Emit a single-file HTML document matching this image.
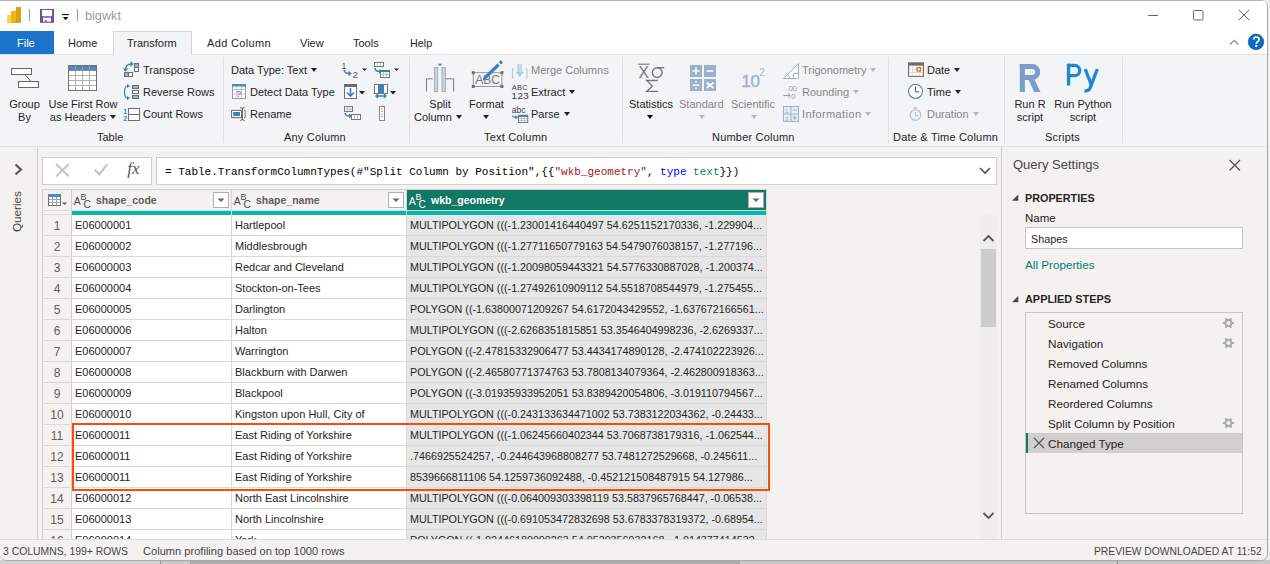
<!DOCTYPE html>
<html><head><meta charset="utf-8">
<style>
*{margin:0;padding:0;box-sizing:border-box}
html,body{width:1270px;height:564px;overflow:hidden;background:#eeeeee;font-family:"Liberation Sans",sans-serif;position:relative}
.a{position:absolute;white-space:nowrap}
#win{position:absolute;left:0;top:0;width:1268px;height:561px;background:#f3f2f1;border-radius:0 7px 7px 7px;overflow:hidden;border-right:1px solid #a8a8a8;border-bottom:1px solid #a8a8a8}
.t{position:absolute;white-space:nowrap;font-size:11px;line-height:13px;color:#252423}
.dis{color:#868686}
.sep{position:absolute;top:57px;width:1px;height:86px;background:#e1e1e1}
.arr{display:inline-block;width:0;height:0;border-left:3.5px solid transparent;border-right:3.5px solid transparent;border-top:4px solid #252423;vertical-align:middle;margin-left:4px;position:relative;top:-1px}
.arr.g{border-top-color:#b5b5b5}
.hd{position:absolute;height:21px;font-size:10.5px;font-weight:bold;color:#605e5c;line-height:21px;white-space:nowrap}
.cell{position:absolute;height:21px;line-height:21px;font-size:11px;color:#252423;overflow:hidden;white-space:nowrap}
.rn{position:absolute;left:42px;width:30px;height:21px;line-height:21px;text-align:center;font-size:12px;color:#605e5c}
.abc{position:absolute;width:20px;height:21px;font-size:10.5px;line-height:21px;white-space:nowrap}
.abc sup{font-size:9px;vertical-align:4px;margin-left:-0.5px}
.abc sub{font-size:10.5px;vertical-align:-3px;margin-left:-1px}
.step{position:absolute;left:1048px;font-size:11.7px;line-height:14px;color:#252423;white-space:nowrap}
.gear{position:absolute;left:1223px;width:11px;height:11px;border-radius:50%;border:2.5px dotted #b8b8b8}
svg{position:absolute;overflow:visible}
</style></head><body>
<div class="a" style="left:0;top:560px;width:1270px;height:4px;background:#c8c8c8"></div>
<div class="a" style="left:0;top:560px;width:160px;height:4px;background:#d2d2d2"></div>
<div class="a" style="left:160px;top:560px;width:1px;height:4px;background:#999"></div>
<div class="a" style="left:190px;top:560px;width:1px;height:4px;background:#aaa"></div>
<div class="a" style="left:191px;top:560px;width:549px;height:4px;background:#adadad"></div>
<div class="a" style="left:1117px;top:561px;width:1px;height:3px;background:#8a8a8a"></div>
<div id="win">
  <!-- title bar -->
  <div class="a" style="left:0;top:0;width:1268px;height:31px;background:#fff;border-top:1px solid #b4b4b4"></div>
  <!-- tab row -->
  <div class="a" style="left:0;top:31px;width:1268px;height:23px;background:#fff"></div>
  <div class="a" style="left:0;top:31px;width:54px;height:23px;background:#1a74c9"></div>
  <div class="t" style="left:17px;top:37px;color:#fff">File</div>
  <!-- ribbon -->
  <div class="a" id="ribbon" style="left:0;top:54px;width:1268px;height:93px;background:#f3f4f6;border-top:1px solid #e1e1e1;border-bottom:1px solid #e1e1e1"></div>

  <!-- title content -->
  <svg style="left:0;top:0" width="130" height="31">
    <rect x="7" y="15" width="5" height="8" fill="#f5d24a"/>
    <rect x="11" y="11" width="5.5" height="12" fill="#eab819"/>
    <rect x="16" y="7" width="5" height="16" fill="#dca311"/>
    <rect x="29" y="9" width="1" height="12" fill="#9a9a9a"/>
    <rect x="40" y="9" width="14" height="13.8" fill="#7b4aa8"/>
    <path d="M42 10 H52 V15.3 Q52 16.3 51 16.3 H43 Q42 16.3 42 15.3 Z" fill="#fff"/>
    <rect x="43" y="17.7" width="8" height="3.9" fill="#fff"/>
    <rect x="45.2" y="20" width="1.8" height="1.6" fill="#7b4aa8"/>
    <rect x="62" y="14" width="7" height="1.1" fill="#111"/>
    <path d="M62.8 17 h5.6 l-2.8 3.2 z" fill="#111"/>
    <rect x="77" y="9" width="1" height="12" fill="#9a9a9a"/>
  </svg>
  <div class="a" style="left:85px;top:9px;font-size:12.7px;line-height:15px;color:#9b9b9b">bigwkt</div>
  <svg style="left:1140px;top:0" width="128" height="54">
    <rect x="8" y="15" width="10" height="1" fill="#666"/>
    <rect x="53.5" y="10.5" width="9.5" height="9.5" rx="1.2" fill="none" stroke="#666" stroke-width="1"/>
    <path d="M99 10 L109 20 M109 10 L99 20" stroke="#666" stroke-width="1"/>
    <path d="M90 44.5 L94.2 40.3 L98.4 44.5" fill="none" stroke="#888" stroke-width="1.1"/>
    <circle cx="116" cy="41.9" r="7.8" fill="#0d68c6" stroke="#0b559f" stroke-width="0.6"/>
  </svg>
  <svg style="left:0;top:0" width="1270" height="60"><path d="M1253.6 39.6 Q1253.8 37 1256.4 37 Q1259 37 1259 39.4 Q1259 41 1257.2 42 Q1256.3 42.6 1256.3 44" fill="none" stroke="#fff" stroke-width="1.7"/><rect x="1255.3" y="45" width="2" height="2" fill="#fff"/></svg>
  <!-- tabs -->
  <div class="a" style="left:113px;top:31px;width:79px;height:24px;background:#f3f4f6;border:1px solid #d6d6d6;border-bottom:none"></div>
  <div class="t" style="left:68px;top:37px">Home</div>
  <div class="t" style="left:127px;top:37px">Transform</div>
  <div class="t" style="left:207px;top:37px;letter-spacing:0.35px">Add Column</div>
  <div class="t" style="left:300px;top:37px">View</div>
  <div class="t" style="left:353px;top:37px">Tools</div>
  <div class="t" style="font-size:10.75px;left:410px;top:37px">Help</div>

  <!-- ===== RIBBON: Table ===== -->
  <svg style="left:0;top:54px" width="224" height="92">
    <rect x="11.5" y="14.5" width="20" height="6" fill="#fff" stroke="#666" stroke-width="1"/>
    <rect x="18.5" y="27.5" width="20" height="6" fill="#fff" stroke="#666" stroke-width="1"/>
    <path d="M25 20.5 L31 27.5" stroke="#666" stroke-width="1"/>
    <!-- use first row -->
    <rect x="68.5" y="11.5" width="28" height="25" fill="#fff" stroke="#707070" stroke-width="1"/>
    <rect x="69" y="12" width="27" height="4.5" fill="#4f86c6"/>
    <path d="M75.5 16.5 V36 M82.5 16.5 V36 M89.5 16.5 V36" stroke="#b0b0b0" stroke-width="1"/>
    <path d="M69 21.5 H96 M69 26.5 H96 M69 31.5 H96" stroke="#b0b0b0" stroke-width="1"/>
    <path d="M69 16.5 H96" stroke="#8a8a8a" stroke-width="1"/><path d="M75.5 12 V16.5 M82.5 12 V16.5 M89.5 12 V16.5" stroke="#9a9a9a" stroke-width="1"/>
    <rect x="68.5" y="11.5" width="28" height="25" fill="none" stroke="#707070" stroke-width="1"/>
    <!-- transpose -->
    <path d="M125.5 16 Q125.5 10 131.5 10" fill="none" stroke="#3c7fc1" stroke-width="1.4"/>
    <path d="M130.5 7.3 L133.8 10 L130.5 12.7 Z" fill="#3c7fc1"/>
    <path d="M123 14.5 L125.5 17.8 L128 14.5 Z" fill="#3c7fc1"/>
    <rect x="124.5" y="18.5" width="8" height="4" fill="#fff" stroke="#6e6e6e"/>
    <rect x="125" y="19" width="3.5" height="3" fill="#8fb2d9"/>
    <path d="M128.5 18.5 V22.5" stroke="#6e6e6e"/>
    <rect x="134.5" y="9.5" width="4" height="8" fill="#fff" stroke="#6e6e6e"/>
    <rect x="135" y="10" width="3" height="3.5" fill="#8fb2d9"/>
    <path d="M134.5 13.5 H138.5" stroke="#6e6e6e"/>
    <!-- reverse rows -->
    <path d="M127.5 32 Q124.5 32 124.5 38 Q124.5 44 127.5 44" fill="none" stroke="#3c7fc1" stroke-width="1.2"/>
    <path d="M127 30 L130 32 L127 34 Z M127 42 L130 44 L127 46 Z" fill="#3c7fc1"/>
    <rect x="132.5" y="31.5" width="6" height="3" fill="#8fb2d9" stroke="#6e6e6e"/>
    <rect x="132.5" y="36.5" width="6" height="3" fill="#fff" stroke="#6e6e6e"/>
    <rect x="132.5" y="41.5" width="6" height="3" fill="#8fb2d9" stroke="#6e6e6e"/>
    <!-- count rows -->
    <rect x="128.5" y="54.5" width="11" height="12" fill="#fff" stroke="#6e6e6e"/>
    <path d="M128.5 60.5 H139.5" stroke="#6e6e6e"/>
    <text x="123.3" y="60" font-size="7" font-weight="bold" fill="#3c7fc1" font-family="Liberation Sans">1</text>
    <text x="123.3" y="67" font-size="7" font-weight="bold" fill="#3c7fc1" font-family="Liberation Sans">2</text>
  </svg>
  <div class="t" style="left:8px;top:98px;width:33px;text-align:center">Group</div>
  <div class="t" style="left:8px;top:111px;width:33px;text-align:center">By</div>
  <div class="t" style="left:48px;top:98px;width:70px;text-align:center">Use First Row</div>
  <div class="t" style="left:48px;top:111px;width:70px;text-align:center">as Headers<span class="arr"></span></div>
  <div class="t" style="left:143px;top:64px">Transpose</div>
  <div class="t" style="left:143px;top:86px">Reverse Rows</div>
  <div class="t" style="left:143px;top:108px">Count Rows</div>
  <div class="t" style="left:97px;top:131px">Table</div>
  <div class="sep" style="left:223px"></div>

  <!-- ===== Any Column ===== -->
  <div class="t" style="left:231px;top:64px">Data Type: Text<span class="arr"></span></div>
  <svg style="left:224px;top:54px" width="186" height="92">
    <!-- detect data type -->
    <rect x="8.5" y="30.5" width="13" height="14" fill="#fff" stroke="#9a9a9a"/>
    <rect x="8" y="30" width="14" height="2.5" fill="#4f86c6"/>
    <path d="M8.5 35.5 H21.5 M8.5 40 H21.5 M13 32 V44.5 M17.5 32 V44.5" stroke="#b5b5b5" stroke-width="0.8"/>
    <text x="12" y="43" font-size="9" fill="#3c7fc1" font-family="Liberation Sans">?</text>
    <!-- rename -->
    <rect x="7.6" y="56.4" width="10" height="7.2" fill="#fff" stroke="#6e6e6e" stroke-width="1.1"/>
    <rect x="9.2" y="58" width="6.8" height="4" fill="#3f7fc0"/>
    <path d="M18.4 54.5 V65.5 M16.2 53.6 Q18.4 53.6 18.4 55 Q18.4 53.6 20.6 53.6 M16.2 66.4 Q18.4 66.4 18.4 65 Q18.4 66.4 20.6 66.4" fill="none" stroke="#555" stroke-width="0.9"/>
    <path d="M20.2 56.4 H21.2 V63.6 H20.2" fill="none" stroke="#6e6e6e" stroke-width="0.9"/>
    <!-- col1 icons -->
    <text x="117.6" y="14.5" font-size="8.6" fill="#555" font-family="Liberation Sans">1</text>
    <path d="M120 16 Q120.5 19.5 126 19.5" fill="none" stroke="#3c7fc1" stroke-width="1.6"/>
    <path d="M124.5 16.8 L127.8 19.5 L124.5 22.2 Z" fill="#3c7fc1"/>
    <text x="128.6" y="24" font-size="9.6" fill="#555" font-family="Liberation Sans">2</text>
    <path d="M138 14.5 h5 l-2.5 2.5 z" fill="#252423"/>
    <!-- col2 top -->
    <rect x="150.5" y="8.5" width="9" height="4" fill="#fff" stroke="#777"/>
    <path d="M153.5 8.5 V12.5 M156.5 8.5 V12.5" stroke="#999" stroke-width="0.6"/>
    <path d="M151 14 Q151 17.5 156 17.5" fill="none" stroke="#3c7fc1" stroke-width="1.4"/>
    <path d="M155 15 L158 17.5 L155 20 Z" fill="#3c7fc1"/>
    <rect x="156.5" y="16.5" width="9" height="7" fill="#fff" stroke="#777"/>
    <rect x="156" y="16" width="10" height="2" fill="#3c7fc1"/>
    <path d="M156.5 20.5 H165.5 M159.5 18 V23.5 M162.5 18 V23.5" stroke="#999" stroke-width="0.6"/>
    <path d="M170 14.5 h5 l-2.5 2.5 z" fill="#252423"/>
    <!-- col1 mid: fill down -->
    <rect x="120.5" y="30.5" width="12" height="14" fill="#fff" stroke="#777"/>
    <rect x="120" y="30" width="13" height="3" fill="#6b6b6b"/>
    <path d="M126.5 34 V42 M123 38.5 L126.5 42 L130 38.5" fill="none" stroke="#3c7fc1" stroke-width="1.6"/>
    <path d="M135 37 h6 l-3 3.5 z" fill="#252423"/>
    <!-- col2 mid -->
    <rect x="150.5" y="30.5" width="4" height="9" fill="#fff" stroke="#777"/>
    <rect x="155" y="30" width="4" height="10" fill="#3c7fc1"/>
    <rect x="159.5" y="30.5" width="4" height="9" fill="#fff" stroke="#777"/>
    <path d="M152 42 H162 M154 40 L152 42 L154 44 M160 40 L162 42 L160 44" fill="none" stroke="#3c7fc1" stroke-width="1.3"/>
    <path d="M166 37 h6 l-3 3.5 z" fill="#252423"/>
    <!-- col1 bottom -->
    <rect x="120.5" y="52.5" width="8" height="5" fill="#fff" stroke="#777"/>
    <path d="M120.5 55 H128.5 M123.2 52.5 V57.5 M125.9 52.5 V57.5" stroke="#999" stroke-width="0.6"/>
    <path d="M121 59 Q121 62 126 62" fill="none" stroke="#3c7fc1" stroke-width="1.3"/>
    <path d="M125 59.5 L128 62 L125 64.5 Z" fill="#3c7fc1"/>
    <rect x="127.5" y="60.5" width="9" height="5" fill="#fff" stroke="#777"/>
    <path d="M130.5 60.5 V65.5 M133.5 60.5 V65.5" stroke="#999" stroke-width="0.6"/>
    <!-- col2 bottom -->
    <rect x="155.5" y="52.5" width="5" height="14" fill="#fff" stroke="#888"/>
    <path d="M157 55 H159 M157 57.5 H159 M157 60 H159 M157 62.5 H159" stroke="#999" stroke-width="0.8"/>
  </svg>
  <div class="t" style="left:250px;top:86px">Detect Data Type</div>
  <div class="t" style="left:250px;top:108px">Rename</div>
  <div class="t" style="left:284px;top:131px;letter-spacing:0.2px">Any Column</div>
  <div class="sep" style="left:409px"></div>

  <!-- ===== Text Column ===== -->
  <svg style="left:410px;top:54px" width="213" height="92">
    <path d="M16.5 37.6 V24.8 H22.5 M35.4 24.8 H43.6 V37.6" fill="none" stroke="#7a7a7a" stroke-width="1"/>
    <rect x="24.4" y="13.5" width="3.3" height="24.1" fill="#c5d6ea" stroke="#a0a0a0" stroke-width="0.8"/>
    <rect x="32" y="13.5" width="3.3" height="24.1" fill="#c5d6ea" stroke="#a0a0a0" stroke-width="0.8"/>
    <path d="M27.6 9.8 h4.8 l-2.4 2.3 z" fill="#3c7fc1"/>
    <!-- format -->
    <rect x="63.3" y="18.7" width="28.6" height="13.7" fill="none" stroke="#8a8a8a" stroke-width="0.9"/>
    <rect x="61.8" y="17.2" width="3" height="3" fill="#6e6e6e"/><rect x="90.4" y="17.2" width="3" height="3" fill="#6e6e6e"/>
    <rect x="61.8" y="30.9" width="3" height="3" fill="#6e6e6e"/><rect x="90.4" y="30.9" width="3" height="3" fill="#6e6e6e"/>
    <text x="65.3" y="29.8" font-size="12" fill="#777" font-family="Liberation Sans">ABC</text>
    <path d="M75.2 23.6 L88.6 10.6" stroke="#3f7fc0" stroke-width="3.4"/>
    <path d="M89.8 9.4 L91.8 7.4" stroke="#3f7fc0" stroke-width="3.4"/>
    <path d="M72.6 26.4 L73.8 22.2 L76.8 25.2 Z" fill="#3f7fc0"/>
    <!-- merge -->
    <path d="M103.8 14.9 H102.4 V23.8 H103.8 M115.6 14.9 H117 V23.8 H115.6" fill="none" stroke="#a9bfdc" stroke-width="1"/>
    <rect x="107.2" y="10.1" width="5" height="9" fill="#c5d6ea"/>
    <path d="M105.8 18 h7.8 l-3.9 5 z" fill="#b5c8e2"/>
    <text x="101.8" y="35.6" font-size="7.4" fill="#3a3a3a" font-family="Liberation Sans" letter-spacing="0.3">ABC</text>
    <text x="101.6" y="44.8" font-size="9.8" fill="#3a3a3a" font-family="Liberation Sans" letter-spacing="0.4">123</text>
    <text x="101.8" y="59.4" font-size="8.6" fill="#3a3a3a" font-family="Liberation Sans">abc</text>
    <path d="M102.2 61.8 Q103.2 63.3 106.3 63.3" fill="none" stroke="#3c7fc1" stroke-width="1.4"/>
    <path d="M105.4 61 L108.2 63.3 L105.4 65.6 Z" fill="#3c7fc1"/>
    <rect x="108" y="60.8" width="10.2" height="2" fill="#3c7fc1"/>
    <rect x="108.5" y="62.5" width="9.2" height="6" fill="#fff" stroke="#777"/>
    <path d="M108.5 64.5 H117.7 M108.5 66.5 H117.7 M111.5 62.5 V68.5 M114.5 62.5 V68.5" stroke="#aaa" stroke-width="0.7"/>
  </svg>
  <div class="t" style="left:419px;top:98px;width:42px;text-align:center">Split</div>
  <div class="t" style="left:414px;top:111px">Column<span class="arr"></span></div>
  <div class="t" style="left:469px;top:98px">Format</div>
  <div class="t" style="left:483px;top:111px"><span class="arr" style="margin-left:0"></span></div>
  <div class="t dis" style="left:531px;top:64px">Merge Columns</div>
  <div class="t" style="left:531px;top:86px">Extract<span class="arr"></span></div>
  <div class="t" style="left:531px;top:108px">Parse<span class="arr"></span></div>
  <div class="t" style="left:484px;top:131px;letter-spacing:0.2px">Text Column</div>
  <div class="sep" style="left:622px"></div>

  <!-- ===== Number Column ===== -->
  <svg style="left:623px;top:54px" width="266" height="92">
    <path d="M15.3 10.2 H26.5" stroke="#777" stroke-width="1.1"/>
    <text x="15.4" y="23.6" font-size="15.6" fill="#777" font-family="Liberation Sans">X</text>
    <circle cx="34.2" cy="18.6" r="4.9" fill="none" stroke="#777" stroke-width="1.4"/>
    <path d="M34 13.7 H41.2" stroke="#777" stroke-width="1.4"/>
    <path d="M34.8 26.5 H23.6 L29.4 32 L23.6 37.4 H35.2" fill="none" stroke="#777" stroke-width="1.3"/>
    <!-- standard -->
    <rect x="67" y="11" width="12" height="12" fill="#9db0cd"/><rect x="81" y="11" width="12" height="12" fill="#9db0cd"/>
    <rect x="67" y="25" width="12" height="12" fill="#9db0cd"/><rect x="81" y="25" width="12" height="12" fill="#9db0cd"/>
    <path d="M69.5 17 h7 M73 13.5 v7 M83.5 17 h7 M69.5 31 h7 M83.5 28.5 l7 5.5 M90.5 28.5 l-7 5.5" stroke="#fff" stroke-width="1.6"/>
    <circle cx="73" cy="27.8" r="0.9" fill="#fff"/><circle cx="73" cy="34.2" r="0.9" fill="#fff"/>
    <text x="118.4" y="32.9" font-size="17" fill="#a3b5cf" stroke="#a3b5cf" stroke-width="0.5" font-family="Liberation Sans" letter-spacing="-0.3">10</text>
    <text x="136.2" y="21.7" font-size="10" fill="#a3b5cf" font-family="Liberation Sans">2</text>
    <!-- trig -->
    <path d="M160.5 24.5 L175.5 9.5 V24.5 Z" fill="#fff" stroke="#9db0cd" stroke-width="1"/>
    <path d="M170.5 24.5 V19.5 H175.5" fill="none" stroke="#9db0cd"/>
    <path d="M166.5 24.5 Q166.5 21 164 19.5" fill="none" stroke="#9db0cd" stroke-width="0.8"/>
    <text x="163.5" y="37" font-size="8" fill="#8d9cb3" font-family="Liberation Sans" letter-spacing="-0.3">.00</text>
    <text x="166" y="45" font-size="8" fill="#8d9cb3" font-family="Liberation Sans" letter-spacing="-0.3">.0</text>
    <path d="M160.5 41.5 H167 M165 39.3 L167.2 41.5 L165 43.7" fill="none" stroke="#8d9cb3" stroke-width="1"/>
    <rect x="160.5" y="52.5" width="15" height="15" fill="#e6ecf5" stroke="#9db0cd"/>
    <path d="M168 52.5 V67.5 M160.5 60 H175.5" stroke="#9db0cd"/>
    <text x="162" y="59" font-size="6" fill="#9aa9bd" font-family="Liberation Sans">1</text>
    <text x="162" y="66.5" font-size="6" fill="#9aa9bd" font-family="Liberation Sans">3</text>
    <path d="M169.5 56 h4.5 M169.5 63.8 h4.5 M171.8 61.5 v4.6" stroke="#9aa9bd" stroke-width="0.9"/>
  </svg>
  <div class="t" style="left:629px;top:98px">Statistics</div>
  <div class="t" style="left:647px;top:111px"><span class="arr" style="margin-left:0;border-top-color:#000"></span></div>
  <div class="t dis" style="left:679px;top:98px">Standard</div>
  <div class="t" style="left:699px;top:111px"><span class="arr g" style="margin-left:0"></span></div>
  <div class="t dis" style="left:731px;top:98px">Scientific</div>
  <div class="t" style="left:751px;top:111px"><span class="arr g" style="margin-left:0"></span></div>
  <div class="t dis" style="left:802px;top:64px">Trigonometry<span class="arr g"></span></div>
  <div class="t dis" style="left:802px;top:86px">Rounding<span class="arr g"></span></div>
  <div class="t dis" style="left:802px;top:108px;letter-spacing:0.4px">Information<span class="arr g"></span></div>
  <div class="t" style="left:712px;top:131px;letter-spacing:0.2px">Number Column</div>
  <div class="sep" style="left:888px"></div>

  <!-- ===== Date & Time ===== -->
  <svg style="left:889px;top:54px" width="116" height="92">
    <rect x="19" y="8.3" width="16" height="14.6" fill="#6e6e6e"/>
    <rect x="20" y="11.5" width="14" height="10.4" fill="#c2c2c2"/>
    <g fill="#fff">
      <rect x="20.4" y="12.0" width="3" height="2.8"/><rect x="23.8" y="12.0" width="3" height="2.8"/><rect x="27.2" y="12.0" width="3" height="2.8"/><rect x="30.6" y="12.0" width="3" height="2.8"/>
      <rect x="20.4" y="15.4" width="3" height="2.8"/><rect x="23.8" y="15.4" width="3" height="2.8"/><rect x="27.2" y="15.4" width="3" height="2.8"/><rect x="30.6" y="15.4" width="3" height="2.8"/>
      <rect x="20.4" y="18.8" width="3" height="2.8"/><rect x="23.8" y="18.8" width="3" height="2.8"/><rect x="27.2" y="18.8" width="3" height="2.8"/><rect x="30.6" y="18.8" width="3" height="2.8"/>
    </g>
    <rect x="28.2" y="13.7" width="3.3" height="3.3" fill="#fff" stroke="#e8701a" stroke-width="1.3"/>
    <circle cx="26.5" cy="37.3" r="7" fill="#fff" stroke="#4a7fc0" stroke-width="1.1"/>
    <path d="M26.5 32.5 V37.8 H30" fill="none" stroke="#555" stroke-width="1"/>
    <circle cx="26.5" cy="61" r="5.3" fill="none" stroke="#a9bfdc" stroke-width="1.1"/>
    <path d="M24.5 53.8 H28.5 M26.5 54 V55.5" stroke="#a9bfdc" stroke-width="1"/>
    <path d="M26.5 58 V61.5 H29" fill="none" stroke="#a9bfdc" stroke-width="0.9"/>
  </svg>
  <div class="t" style="left:927px;top:64px">Date<span class="arr"></span></div>
  <div class="t" style="left:927px;top:86px">Time<span class="arr"></span></div>
  <div class="t dis" style="left:927px;top:108px">Duration<span class="arr g"></span></div>
  <div class="t" style="left:893px;top:131px;letter-spacing:0.2px">Date &amp; Time Column</div>
  <div class="sep" style="left:1004px"></div>

  <!-- ===== Scripts ===== -->
  <svg style="left:0;top:0" width="1270" height="100">
    <g fill="none" stroke="#7a9dca" stroke-width="5.1">
      <path d="M1022.35 63.9 V92"/>
      <path d="M1019.8 66.45 H1032.2 A5.52 5.52 0 0 1 1032.2 77.5 H1022"/>
    </g>
    <path d="M1027.5 77.5 L1033.5 77.5 L1040.5 92 L1034.2 92 Z" fill="#7a9dca"/>
    <g fill="none" stroke="#1e88d6" stroke-width="3.3">
      <path d="M1068.55 63.7 V85.4"/>
      <path d="M1066.9 65.35 H1074.6 A5.15 5.15 0 0 1 1074.6 75.65 H1068.5"/>
      <path d="M1085.2 69 L1091.6 85.6"/>
      <path d="M1097.3 69 L1090.2 87.8 Q1088.6 91.4 1084.5 90.8"/>
    </g>
  </svg>
  
  <div class="t" style="left:1014px;top:98px;width:32px;text-align:center">Run R</div>
  <div class="t" style="left:1014px;top:111px;width:32px;text-align:center">script</div>
  <div class="t" style="left:1052px;top:98px;width:62px;text-align:center">Run Python</div>
  <div class="t" style="left:1052px;top:111px;width:62px;text-align:center">script</div>
  <div class="t" style="left:1045px;top:131px;letter-spacing:0.2px">Scripts</div>
  <div class="sep" style="left:1122px"></div>
  <!-- main -->
  <div class="a" id="main" style="left:0;top:147px;width:1268px;height:392px;background:#f3f2f1"></div>

  <!-- ===== MAIN ===== -->
  <div class="a" style="left:37px;top:147px;width:1px;height:392px;background:#d2d0ce"></div>
  <svg style="left:0;top:147px" width="37" height="100">
    <path d="M15.5 17.5 L21 22.5 L15.5 27.5" fill="none" stroke="#555" stroke-width="2.1"/>
  </svg>
  <div class="a" style="left:-3px;top:204.5px;width:40px;height:14px;font-size:11.7px;line-height:14px;color:#484644;transform:rotate(-90deg);text-align:center">Queries</div>
  <!-- formula bar -->
  <div class="a" style="left:42px;top:157px;width:110px;height:28px;background:#fff;border:1px solid #d2d0ce"></div>
  <svg style="left:42px;top:157px" width="110" height="28">
    <path d="M14 7 L27 19.5 M27 7 L14 19.5" stroke="#c6c6c6" stroke-width="2.2"/>
    <path d="M52.8 12.8 L57.2 17.4 L65.2 7.4" fill="none" stroke="#c6c6c6" stroke-width="2.3"/>
  </svg>
  <div class="a" style="left:127.3px;top:159px;font-family:'Liberation Serif';font-style:italic;font-size:17px;line-height:20px;color:#555">fx</div>
  <div class="a" style="left:156px;top:157px;width:841px;height:28px;background:#fff;border:1px solid #d2d0ce"></div>
  <div class="a" style="left:165px;top:165px;font-family:'Liberation Mono';font-size:11px;line-height:14px;color:#000">= Table.TransformColumnTypes(#"Split Column by Position",{{<span style="color:#a31515">"wkb_geometry"</span>, <span style="color:#0000ff">type</span> <span style="color:#098658">text</span>}})</div>
  <svg style="left:975px;top:160px" width="20" height="20">
    <path d="M5 8 L10 13 L15 8" fill="none" stroke="#555" stroke-width="1.6"/>
  </svg>
  <!-- table -->
  <div class="a" style="left:42px;top:189px;width:725px;height:350px;background:#fff;border-left:1px solid #d2d0ce;border-top:1px solid #d2d0ce;overflow:hidden">
  </div>
  <div class="a" style="left:42px;top:189px;width:30px;height:350px;background:#f3f2f1;border-left:1px solid #d2d0ce;border-top:1px solid #d2d0ce;border-right:1px solid #d2d0ce"></div>
  <div class="a" style="left:72px;top:190px;width:335px;height:21px;background:#f3f2f1"></div>
  <div class="a" style="left:407px;top:190px;width:359px;height:21px;background:#117865"></div>
  <div class="a" style="left:407px;top:214px;width:359px;height:325px;background:#e6e6e6"></div>
  <div class="a" style="left:72px;top:211px;width:694px;height:4px;background:#01b8aa"></div>
  <div class="a" style="left:42px;top:210px;width:724px;height:1px;background:#d9d9d9"></div>
  <div class="a" style="left:42px;top:214px;width:30px;height:1px;background:#d9d9d9"></div>
  <div class="a" style="left:231px;top:190px;width:1px;height:349px;background:#d9d9d9"></div>
  <div class="a" style="left:406px;top:190px;width:1px;height:349px;background:#d9d9d9"></div>
  <div class="a" style="left:766px;top:189px;width:1px;height:350px;background:#d9d9d9"></div>
  <div class="a" style="left:42px;top:235px;width:724px;height:1px;background:#d9d9d9"></div><div class="a" style="left:42px;top:256px;width:724px;height:1px;background:#d9d9d9"></div><div class="a" style="left:42px;top:277px;width:724px;height:1px;background:#d9d9d9"></div><div class="a" style="left:42px;top:298px;width:724px;height:1px;background:#d9d9d9"></div><div class="a" style="left:42px;top:319px;width:724px;height:1px;background:#d9d9d9"></div><div class="a" style="left:42px;top:340px;width:724px;height:1px;background:#d9d9d9"></div><div class="a" style="left:42px;top:361px;width:724px;height:1px;background:#d9d9d9"></div><div class="a" style="left:42px;top:382px;width:724px;height:1px;background:#d9d9d9"></div><div class="a" style="left:42px;top:403px;width:724px;height:1px;background:#d9d9d9"></div><div class="a" style="left:42px;top:424px;width:724px;height:1px;background:#d9d9d9"></div><div class="a" style="left:42px;top:445px;width:724px;height:1px;background:#d9d9d9"></div><div class="a" style="left:42px;top:466px;width:724px;height:1px;background:#d9d9d9"></div><div class="a" style="left:42px;top:487px;width:724px;height:1px;background:#d9d9d9"></div><div class="a" style="left:42px;top:508px;width:724px;height:1px;background:#d9d9d9"></div><div class="a" style="left:42px;top:529px;width:724px;height:1px;background:#d9d9d9"></div><div class="a" style="left:42px;top:550px;width:724px;height:1px;background:#d9d9d9"></div>
  <svg style="left:42px;top:189px" width="730" height="25">
    <rect x="6.5" y="5.5" width="12" height="11" fill="#fff" stroke="#6e6e6e"/>
    <rect x="6" y="5" width="13" height="3" fill="#4f86c6"/>
    <path d="M7 10.5 H18 M7 13.5 H18 M10.5 8 V16 M14.5 8 V16" stroke="#a0a0a0" stroke-width="1"/>
    <path d="M20 13.5 h5 l-2.5 2.5 z" fill="#555"/>
    <rect x="171.5" y="3.5" width="15" height="15" fill="#fff" stroke="#b0b0b0"/>
    <path d="M175.5 9.5 h7 l-3.5 3.5 z" fill="#666"/>
    <rect x="346.5" y="3.5" width="15" height="15" fill="#fff" stroke="#b0b0b0"/>
    <path d="M350.5 9.5 h7 l-3.5 3.5 z" fill="#666"/>
    <rect x="706.5" y="3.5" width="15" height="15" fill="#fff" stroke="#b0b0b0"/>
    <path d="M710.5 9.5 h7 l-3.5 3.5 z" fill="#666"/>
  </svg>
  <svg style="left:0px;top:0" width="1" height="1"></svg>
  <svg style="left:74px;top:189px" width="20" height="22"><text x="-0.2" y="15.9" font-size="10.4" fill="#484644" font-family="Liberation Sans">A</text><text x="6.6" y="10.6" font-size="8.9" fill="#484644" font-family="Liberation Sans">B</text><text x="9.4" y="18.8" font-size="10.1" fill="#484644" font-family="Liberation Sans">C</text></svg><svg style="left:234px;top:189px" width="20" height="22"><text x="-0.2" y="15.9" font-size="10.4" fill="#484644" font-family="Liberation Sans">A</text><text x="6.6" y="10.6" font-size="8.9" fill="#484644" font-family="Liberation Sans">B</text><text x="9.4" y="18.8" font-size="10.1" fill="#484644" font-family="Liberation Sans">C</text></svg><svg style="left:409px;top:189px" width="20" height="22"><text x="-0.2" y="15.9" font-size="10.4" fill="#ffffff" font-family="Liberation Sans">A</text><text x="6.6" y="10.6" font-size="8.9" fill="#ffffff" font-family="Liberation Sans">B</text><text x="9.4" y="18.8" font-size="10.1" fill="#ffffff" font-family="Liberation Sans">C</text></svg><div class="hd" style="left:96px;top:190px">shape_code</div>
  <svg style="left:160px;top:0" width="1" height="1"></svg>
  <div class="hd" style="left:256px;top:190px">shape_name</div>
  <svg style="left:335px;top:0" width="1" height="1"></svg>
  <div class="hd" style="left:431px;top:190px;color:#fff">wkb_geometry</div>
  <div class="rn" style="top:216px">1</div><div class="cell" style="left:75px;top:215px;width:154px">E06000001</div><div class="cell" style="left:235px;top:215px;width:170px">Hartlepool</div><div class="cell" style="font-size:10.75px;left:410px;top:215px;width:354px">MULTIPOLYGON (((-1.23001416440497 54.6251152170336, -1.229904...</div>
<div class="rn" style="top:237px">2</div><div class="cell" style="left:75px;top:236px;width:154px">E06000002</div><div class="cell" style="left:235px;top:236px;width:170px">Middlesbrough</div><div class="cell" style="font-size:10.75px;left:410px;top:236px;width:354px">MULTIPOLYGON (((-1.27711650779163 54.5479076038157, -1.277196...</div>
<div class="rn" style="top:258px">3</div><div class="cell" style="left:75px;top:257px;width:154px">E06000003</div><div class="cell" style="left:235px;top:257px;width:170px">Redcar and Cleveland</div><div class="cell" style="font-size:10.75px;left:410px;top:257px;width:354px">MULTIPOLYGON (((-1.20098059443321 54.5776330887028, -1.200374...</div>
<div class="rn" style="top:279px">4</div><div class="cell" style="left:75px;top:278px;width:154px">E06000004</div><div class="cell" style="left:235px;top:278px;width:170px">Stockton-on-Tees</div><div class="cell" style="font-size:10.75px;left:410px;top:278px;width:354px">MULTIPOLYGON (((-1.27492610909112 54.5518708544979, -1.275455...</div>
<div class="rn" style="top:300px">5</div><div class="cell" style="left:75px;top:299px;width:154px">E06000005</div><div class="cell" style="left:235px;top:299px;width:170px">Darlington</div><div class="cell" style="font-size:10.75px;left:410px;top:299px;width:354px">POLYGON ((-1.63800071209267 54.6172043429552, -1.637672166561...</div>
<div class="rn" style="top:321px">6</div><div class="cell" style="left:75px;top:320px;width:154px">E06000006</div><div class="cell" style="left:235px;top:320px;width:170px">Halton</div><div class="cell" style="font-size:10.75px;left:410px;top:320px;width:354px">MULTIPOLYGON (((-2.6268351815851 53.3546404998236, -2.6269337...</div>
<div class="rn" style="top:342px">7</div><div class="cell" style="left:75px;top:341px;width:154px">E06000007</div><div class="cell" style="left:235px;top:341px;width:170px">Warrington</div><div class="cell" style="font-size:10.75px;left:410px;top:341px;width:354px">POLYGON ((-2.47815332906477 53.4434174890128, -2.474102223926...</div>
<div class="rn" style="top:363px">8</div><div class="cell" style="left:75px;top:362px;width:154px">E06000008</div><div class="cell" style="left:235px;top:362px;width:170px">Blackburn with Darwen</div><div class="cell" style="font-size:10.75px;left:410px;top:362px;width:354px">POLYGON ((-2.46580771374763 53.7808134079364, -2.462800918363...</div>
<div class="rn" style="top:384px">9</div><div class="cell" style="left:75px;top:383px;width:154px">E06000009</div><div class="cell" style="left:235px;top:383px;width:170px">Blackpool</div><div class="cell" style="font-size:10.75px;left:410px;top:383px;width:354px">POLYGON ((-3.01935933952051 53.8389420054806, -3.019110794567...</div>
<div class="rn" style="top:405px">10</div><div class="cell" style="left:75px;top:404px;width:154px">E06000010</div><div class="cell" style="left:235px;top:404px;width:170px">Kingston upon Hull, City of</div><div class="cell" style="font-size:10.75px;left:410px;top:404px;width:354px">MULTIPOLYGON (((-0.243133634471002 53.7383122034362, -0.24433...</div>
<div class="rn" style="top:426px">11</div><div class="cell" style="left:75px;top:425px;width:154px">E06000011</div><div class="cell" style="left:235px;top:425px;width:170px">East Riding of Yorkshire</div><div class="cell" style="font-size:10.75px;left:410px;top:425px;width:354px">MULTIPOLYGON (((-1.06245660402344 53.7068738179316, -1.062544...</div>
<div class="rn" style="top:447px">12</div><div class="cell" style="left:75px;top:446px;width:154px">E06000011</div><div class="cell" style="left:235px;top:446px;width:170px">East Riding of Yorkshire</div><div class="cell" style="font-size:10.75px;left:410px;top:446px;width:354px">.7466925524257, -0.244643968808277 53.7481272529668, -0.245611...</div>
<div class="rn" style="top:468px">13</div><div class="cell" style="left:75px;top:467px;width:154px">E06000011</div><div class="cell" style="left:235px;top:467px;width:170px">East Riding of Yorkshire</div><div class="cell" style="font-size:10.75px;left:410px;top:467px;width:354px">8539666811106 54.1259736092488, -0.452121508487915 54.127986...</div>
<div class="rn" style="top:489px">14</div><div class="cell" style="left:75px;top:488px;width:154px">E06000012</div><div class="cell" style="left:235px;top:488px;width:170px">North East Lincolnshire</div><div class="cell" style="font-size:10.75px;left:410px;top:488px;width:354px">MULTIPOLYGON (((-0.064009303398119 53.5837965768447, -0.06538...</div>
<div class="rn" style="top:510px">15</div><div class="cell" style="left:75px;top:509px;width:154px">E06000013</div><div class="cell" style="left:235px;top:509px;width:170px">North Lincolnshire</div><div class="cell" style="font-size:10.75px;left:410px;top:509px;width:354px">MULTIPOLYGON (((-0.691053472832698 53.6783378319372, -0.68954...</div>
<div class="rn" style="top:531px">16</div><div class="cell" style="left:75px;top:530px;width:154px">E06000014</div><div class="cell" style="left:235px;top:530px;width:170px">York</div><div class="cell" style="font-size:10.75px;left:410px;top:530px;width:354px">POLYGON ((-1.02446180000263 54.0520356932168, -1.014377414532...</div>

  <!-- orange box -->
  <div class="a" style="left:72px;top:423px;width:698px;height:68px;border:2px solid #fd4a04"></div>
  <!-- clip bottom of table region -->
  <div class="a" style="left:38px;top:539px;width:963px;height:22px;background:#f3f2f1"></div>
  <!-- scrollbar -->
  <div class="a" style="left:980px;top:215px;width:17px;height:324px;background:#efeeed"></div>
  <div class="a" style="left:981px;top:249px;width:15px;height:78px;background:#cdcdcd"></div>
  <svg style="left:980px;top:215px" width="17" height="324">
    <path d="M3.5 26 L8.5 21 L13.5 26" fill="none" stroke="#555" stroke-width="1.8"/>
    <path d="M3.5 298 L8.5 303 L13.5 298" fill="none" stroke="#555" stroke-width="1.8"/>
  </svg>

  <!-- ===== QUERY SETTINGS ===== -->
  <div class="a" style="left:1001px;top:147px;width:1px;height:392px;background:#d2d0ce"></div>
  <div class="a" style="left:1013px;top:157px;font-size:13px;line-height:16px;color:#484644">Query Settings</div>
  <svg style="left:1220px;top:150px" width="30" height="30">
    <path d="M9.5 10 L20 20.5 M20 10 L9.5 20.5" stroke="#555" stroke-width="1.3"/>
  </svg>
  <svg style="left:1005px;top:190px" width="20" height="120">
    <path d="M7 10.7 L13.3 4.5 V10.7 Z" fill="#484644"/>
    <path d="M7 112.2 L13.3 106 V112.2 Z" fill="#484644"/>
  </svg>
  <div class="a" style="left:1025px;top:192px;font-size:10.8px;line-height:13px;font-weight:bold;color:#252423">PROPERTIES</div>
  <div class="a" style="left:1025px;top:212px;font-size:11.5px;line-height:13px;color:#252423">Name</div>
  <div class="a" style="left:1025px;top:227px;width:218px;height:22px;background:#fff;border:1px solid #c8c6c4"></div>
  <div class="a" style="left:1031px;top:233px;font-size:10.8px;line-height:13px;color:#252423">Shapes</div>
  <div class="a" style="left:1025px;top:258px;font-size:11.7px;line-height:14px;color:#0e7a6c">All Properties</div>
  <div class="a" style="left:1025px;top:293px;font-size:10.9px;line-height:13px;font-weight:bold;color:#252423">APPLIED STEPS</div>
  <div class="a" style="left:1025px;top:312px;width:218px;height:202px;background:#f3f2f1;border:1px solid #c8c6c4"></div>
  <div class="a" style="left:1026px;top:433px;width:216px;height:20px;background:#d2d0ce"></div>
  <div class="a" style="left:1026px;top:433px;width:2px;height:20px;background:#117865"></div>
  <div class="step" style="top:317px">Source</div>
  <div class="step" style="top:337px">Navigation</div>
  <div class="step" style="top:357px">Removed Columns</div>
  <div class="step" style="top:377px">Renamed Columns</div>
  <div class="step" style="top:397px">Reordered Columns</div>
  <div class="step" style="top:417px">Split Column by Position</div>
  <div class="step" style="top:437px">Changed Type</div>
  <svg style="left:1025px;top:312px" width="218" height="150">
    <path d="M9 126 L19 136 M19 126 L9 136" stroke="#555" stroke-width="1.2"/>
    <g fill="#b8b8b8"><path id="gear" d="M0 0"/></g>
  </svg>
<svg style="left:1218px;top:313px" width="20" height="20"><g transform="translate(10.4 10)" stroke="#ababab" stroke-width="2.2"><circle r="2.9" fill="none" stroke-width="2"/><path d="M-5.6 0 H-3 M3 0 H5.6 M-2.8 -4.8 L-1.5 -2.6 M2.8 -4.8 L1.5 -2.6 M-2.8 4.8 L-1.5 2.6 M2.8 4.8 L1.5 2.6"/></g></svg><svg style="left:1218px;top:333px" width="20" height="20"><g transform="translate(10.4 10)" stroke="#ababab" stroke-width="2.2"><circle r="2.9" fill="none" stroke-width="2"/><path d="M-5.6 0 H-3 M3 0 H5.6 M-2.8 -4.8 L-1.5 -2.6 M2.8 -4.8 L1.5 -2.6 M-2.8 4.8 L-1.5 2.6 M2.8 4.8 L1.5 2.6"/></g></svg><svg style="left:1218px;top:413px" width="20" height="20"><g transform="translate(10.4 10)" stroke="#ababab" stroke-width="2.2"><circle r="2.9" fill="none" stroke-width="2"/><path d="M-5.6 0 H-3 M3 0 H5.6 M-2.8 -4.8 L-1.5 -2.6 M2.8 -4.8 L1.5 -2.6 M-2.8 4.8 L-1.5 2.6 M2.8 4.8 L1.5 2.6"/></g></svg>
  <!-- status -->
  <!-- status bar -->
  <div class="a" id="status" style="left:0;top:539px;width:1268px;height:22px;background:#f3f2f1;border-top:1px solid #dcdcdc"></div>

  <div class="a" style="left:3px;top:545px;font-size:10.4px;line-height:13px;color:#484644">3 COLUMNS, 199+ ROWS</div>
  <div class="a" style="left:143px;top:545px;font-size:11.1px;line-height:13px;color:#484644">Column profiling based on top 1000 rows</div>
  <div class="a" style="left:1094px;top:545px;font-size:10.3px;line-height:13px;color:#484644">PREVIEW DOWNLOADED AT 11:52</div>
</div>
</body></html>
